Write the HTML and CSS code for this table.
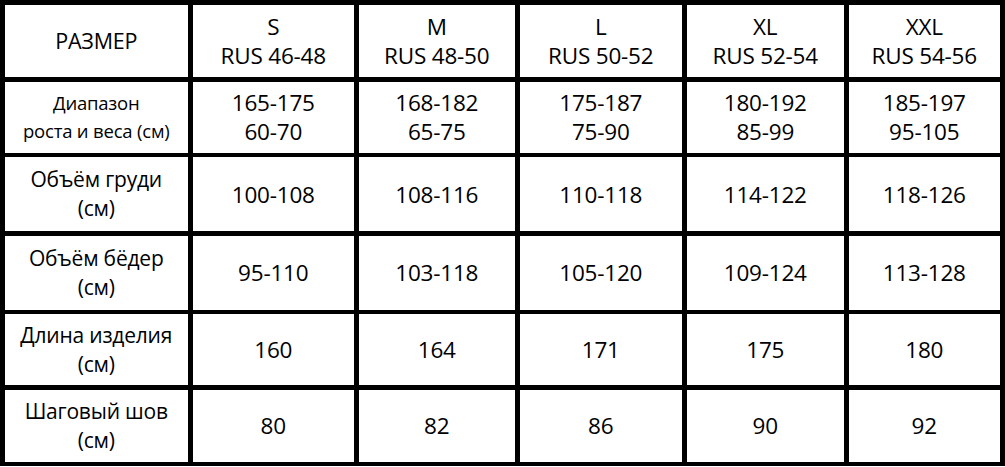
FILE: index.html
```html
<!DOCTYPE html>
<html lang="ru">
<head>
<meta charset="utf-8">
<link rel="stylesheet" href="styles.css">
</head>
<body>
<div class="table">
  <div class="cell head label">РАЗМЕР</div>
  <div class="cell head">S<br>RUS 46-48</div>
  <div class="cell head">M<br>RUS 48-50</div>
  <div class="cell head">L<br>RUS 50-52</div>
  <div class="cell head">XL<br>RUS 52-54</div>
  <div class="cell head">XXL<br>RUS 54-56</div>

  <div class="cell label small">Диапазон<br>роста и веса (см)</div>
  <div class="cell">165-175<br>60-70</div>
  <div class="cell">168-182<br>65-75</div>
  <div class="cell">175-187<br>75-90</div>
  <div class="cell">180-192<br>85-99</div>
  <div class="cell">185-197<br>95-105</div>

  <div class="cell label">Объём груди<br>(см)</div>
  <div class="cell">100-108</div>
  <div class="cell">108-116</div>
  <div class="cell">110-118</div>
  <div class="cell">114-122</div>
  <div class="cell">118-126</div>

  <div class="cell label">Объём бёдер<br>(см)</div>
  <div class="cell">95-110</div>
  <div class="cell">103-118</div>
  <div class="cell">105-120</div>
  <div class="cell">109-124</div>
  <div class="cell">113-128</div>

  <div class="cell label">Длина изделия<br>(см)</div>
  <div class="cell">160</div>
  <div class="cell">164</div>
  <div class="cell">171</div>
  <div class="cell">175</div>
  <div class="cell">180</div>

  <div class="cell label">Шаговый шов<br>(см)</div>
  <div class="cell">80</div>
  <div class="cell">82</div>
  <div class="cell">86</div>
  <div class="cell">90</div>
  <div class="cell">92</div>
</div>
</body>
</html>
```

FILE: styles.css
```css
html, body {
  margin: 0;
  padding: 0;
  background: #fff;
}
.table {
  display: grid;
  grid-template-columns: 183.5px 161.5px 156.5px 162.5px 157.5px 151.5px;
  grid-template-rows: 72.5px 71px 74px 74px 71px 72px;
  gap: 4.5px;
  padding: 4.5px;
  background: #000;
  width: max-content;
  font-family: "Open Sans", "Noto Sans", sans-serif;
  color: #000;
}
.cell {
  background: #fff;
  display: flex;
  align-items: center;
  justify-content: center;
  text-align: center;
  font-size: 22.5px;
  line-height: 29px;
  letter-spacing: -0.2px;
}
.label {
  font-size: 21px;
}
.head.label {
  font-size: 21.5px;
}
.small {
  font-size: 18.5px;
  line-height: 28px;
}
```
